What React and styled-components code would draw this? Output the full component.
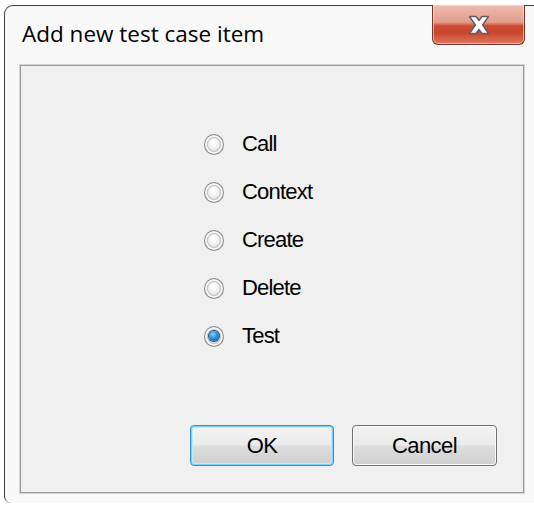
import React, { useState } from 'react';
import styled, { createGlobalStyle } from 'styled-components';

const GlobalStyle = createGlobalStyle`
    html, body {
        margin: 0;
        background: #ffffff;
    }
`;

const items = ['Call', 'Context', 'Create', 'Delete', 'Test'];

export default function App() {
    const [picked, setPicked] = useState('Test');

    return (
        <>
            <GlobalStyle />
            <Window>
                <TitleBar>
                    <Title>Add new test case item</Title>
                    <CloseButton aria-label="Close">
                        <svg width="22" height="20" viewBox="0 0 22 20">
                            <path
                                d="M1.5 1.5 L8 1.5 L11 5.5 L14 1.5 L20.5 1.5 L14.6 10 L20.5 18.5 L14 18.5 L11 14.5 L8 18.5 L1.5 18.5 L7.4 10 Z"
                                fill="#ffffff"
                                stroke="#5f5f5f"
                                strokeWidth="1.4"
                                strokeLinejoin="round"
                            />
                        </svg>
                    </CloseButton>
                </TitleBar>

                <Panel>
                    <RadioGroup>
                        {items.map((name) => (
                            <RadioRow key={name} onClick={() => setPicked(name)}>
                                <Radio checked={picked === name} />
                                <Label>{name}</Label>
                            </RadioRow>
                        ))}
                    </RadioGroup>

                    <ButtonRow>
                        <Button primary>OK</Button>
                        <Button>Cancel</Button>
                    </ButtonRow>
                </Panel>
            </Window>
        </>
    );
}

const Window = styled.div`
    box-sizing: border-box;
    width: 530px;
    height: 498px;
    margin: 5px 0 0 4px;
    padding: 0 10px 10px 15px;

    display: flex;
    flex-direction: column;

    background: #f9f9f9;
    border-top: 1px solid #3f3f3f;
    border-left: 1px solid #3f3f3f;
    border-radius: 9px 0 0 7px;
`;

const TitleBar = styled.div`
    height: 59px;
    flex-shrink: 0;

    display: flex;
    justify-content: space-between;
    align-items: flex-start;
`;

const Title = styled.div`
    margin-top: 13px;
    padding-left: 2px;

    font-family: "Segoe UI", "Open Sans", sans-serif;
    font-size: 22.5px;
    line-height: 30px;
    color: #000000;
`;

const CloseButton = styled.div`
    box-sizing: border-box;
    width: 93px;
    height: 40px;
    margin-top: -1px;
    margin-right: -1px;

    display: flex;
    align-items: center;
    justify-content: center;

    border: 1px solid #7a3328;
    border-top: none;
    border-radius: 0 0 6px 6px;
    background: linear-gradient(
        #f0bcae 0%,
        #e39d8c 44%,
        #cc4a31 54%,
        #c9462e 72%,
        #e07a60 100%
    );
    box-shadow: inset 0 0 0 1px rgba(255, 225, 215, 0.6);
`;

const Panel = styled.div`
    flex: 1;
    display: flex;
    flex-direction: column;

    background: #f0f0f0;
    border: 1px solid #9a9a9a;
    box-shadow: 0 0 0 1px #d2d2d2;
`;

const RadioGroup = styled.div`
    display: flex;
    flex-direction: column;
    padding: 54px 0 0 183px;
`;

const RadioRow = styled.div`
    height: 48px;
    display: flex;
    align-items: center;
    gap: 18px;
    cursor: default;
`;

const Radio = styled.span`
    box-sizing: border-box;
    position: relative;
    width: 20px;
    height: 21px;
    border-radius: 50%;

    border: 1px solid #8a8a8a;
    background: radial-gradient(
        circle at 45% 40%,
        #ffffff 0%,
        #f1f1f1 35%,
        #d0d0d0 80%,
        #c2c2c2 100%
    );
    box-shadow: inset 0 0 0 2px #f6f6f6, inset 0 0 0 3px #bdbdbd;

    &::after {
        content: '';
        display: ${(p) => (p.checked ? 'block' : 'none')};
        position: absolute;
        left: 4px;
        top: 4.5px;
        width: 10px;
        height: 10px;
        border-radius: 50%;
        background: radial-gradient(
            circle at 40% 35%,
            #8fd8ff 0%,
            #2a8fd6 45%,
            #0d5a98 100%
        );
        box-shadow: 0 0 0 1px #1d4f7c;
    }
`;

const Label = styled.span`
    font-family: "Liberation Sans", Arial, sans-serif;
    font-size: 22px;
    letter-spacing: -0.8px;
    color: #000000;
`;

const ButtonRow = styled.div`
    margin-top: auto;
    padding: 0 26px 26px 0;

    display: flex;
    justify-content: flex-end;
    gap: 18px;
`;

const Button = styled.div`
    box-sizing: border-box;
    width: ${(p) => (p.primary ? '144px' : '145px')};
    height: 41px;

    display: flex;
    align-items: center;
    justify-content: center;

    font-family: "Liberation Sans", Arial, sans-serif;
    font-size: 22px;
    letter-spacing: -0.6px;
    color: #000000;

    border-radius: 4px;
    border: 1px solid ${(p) => (p.primary ? '#2f8fd2' : '#707070')};
    background: linear-gradient(
        #f2f2f2 0%,
        #ebebeb 48%,
        #dddddd 52%,
        #cfcfcf 100%
    );
    box-shadow: ${(p) =>
        p.primary
            ? 'inset 0 0 0 1px #7fd0f6, inset 0 0 0 2px #bfe9fb'
            : 'inset 0 0 0 1px #fbfbfb'};
`;
